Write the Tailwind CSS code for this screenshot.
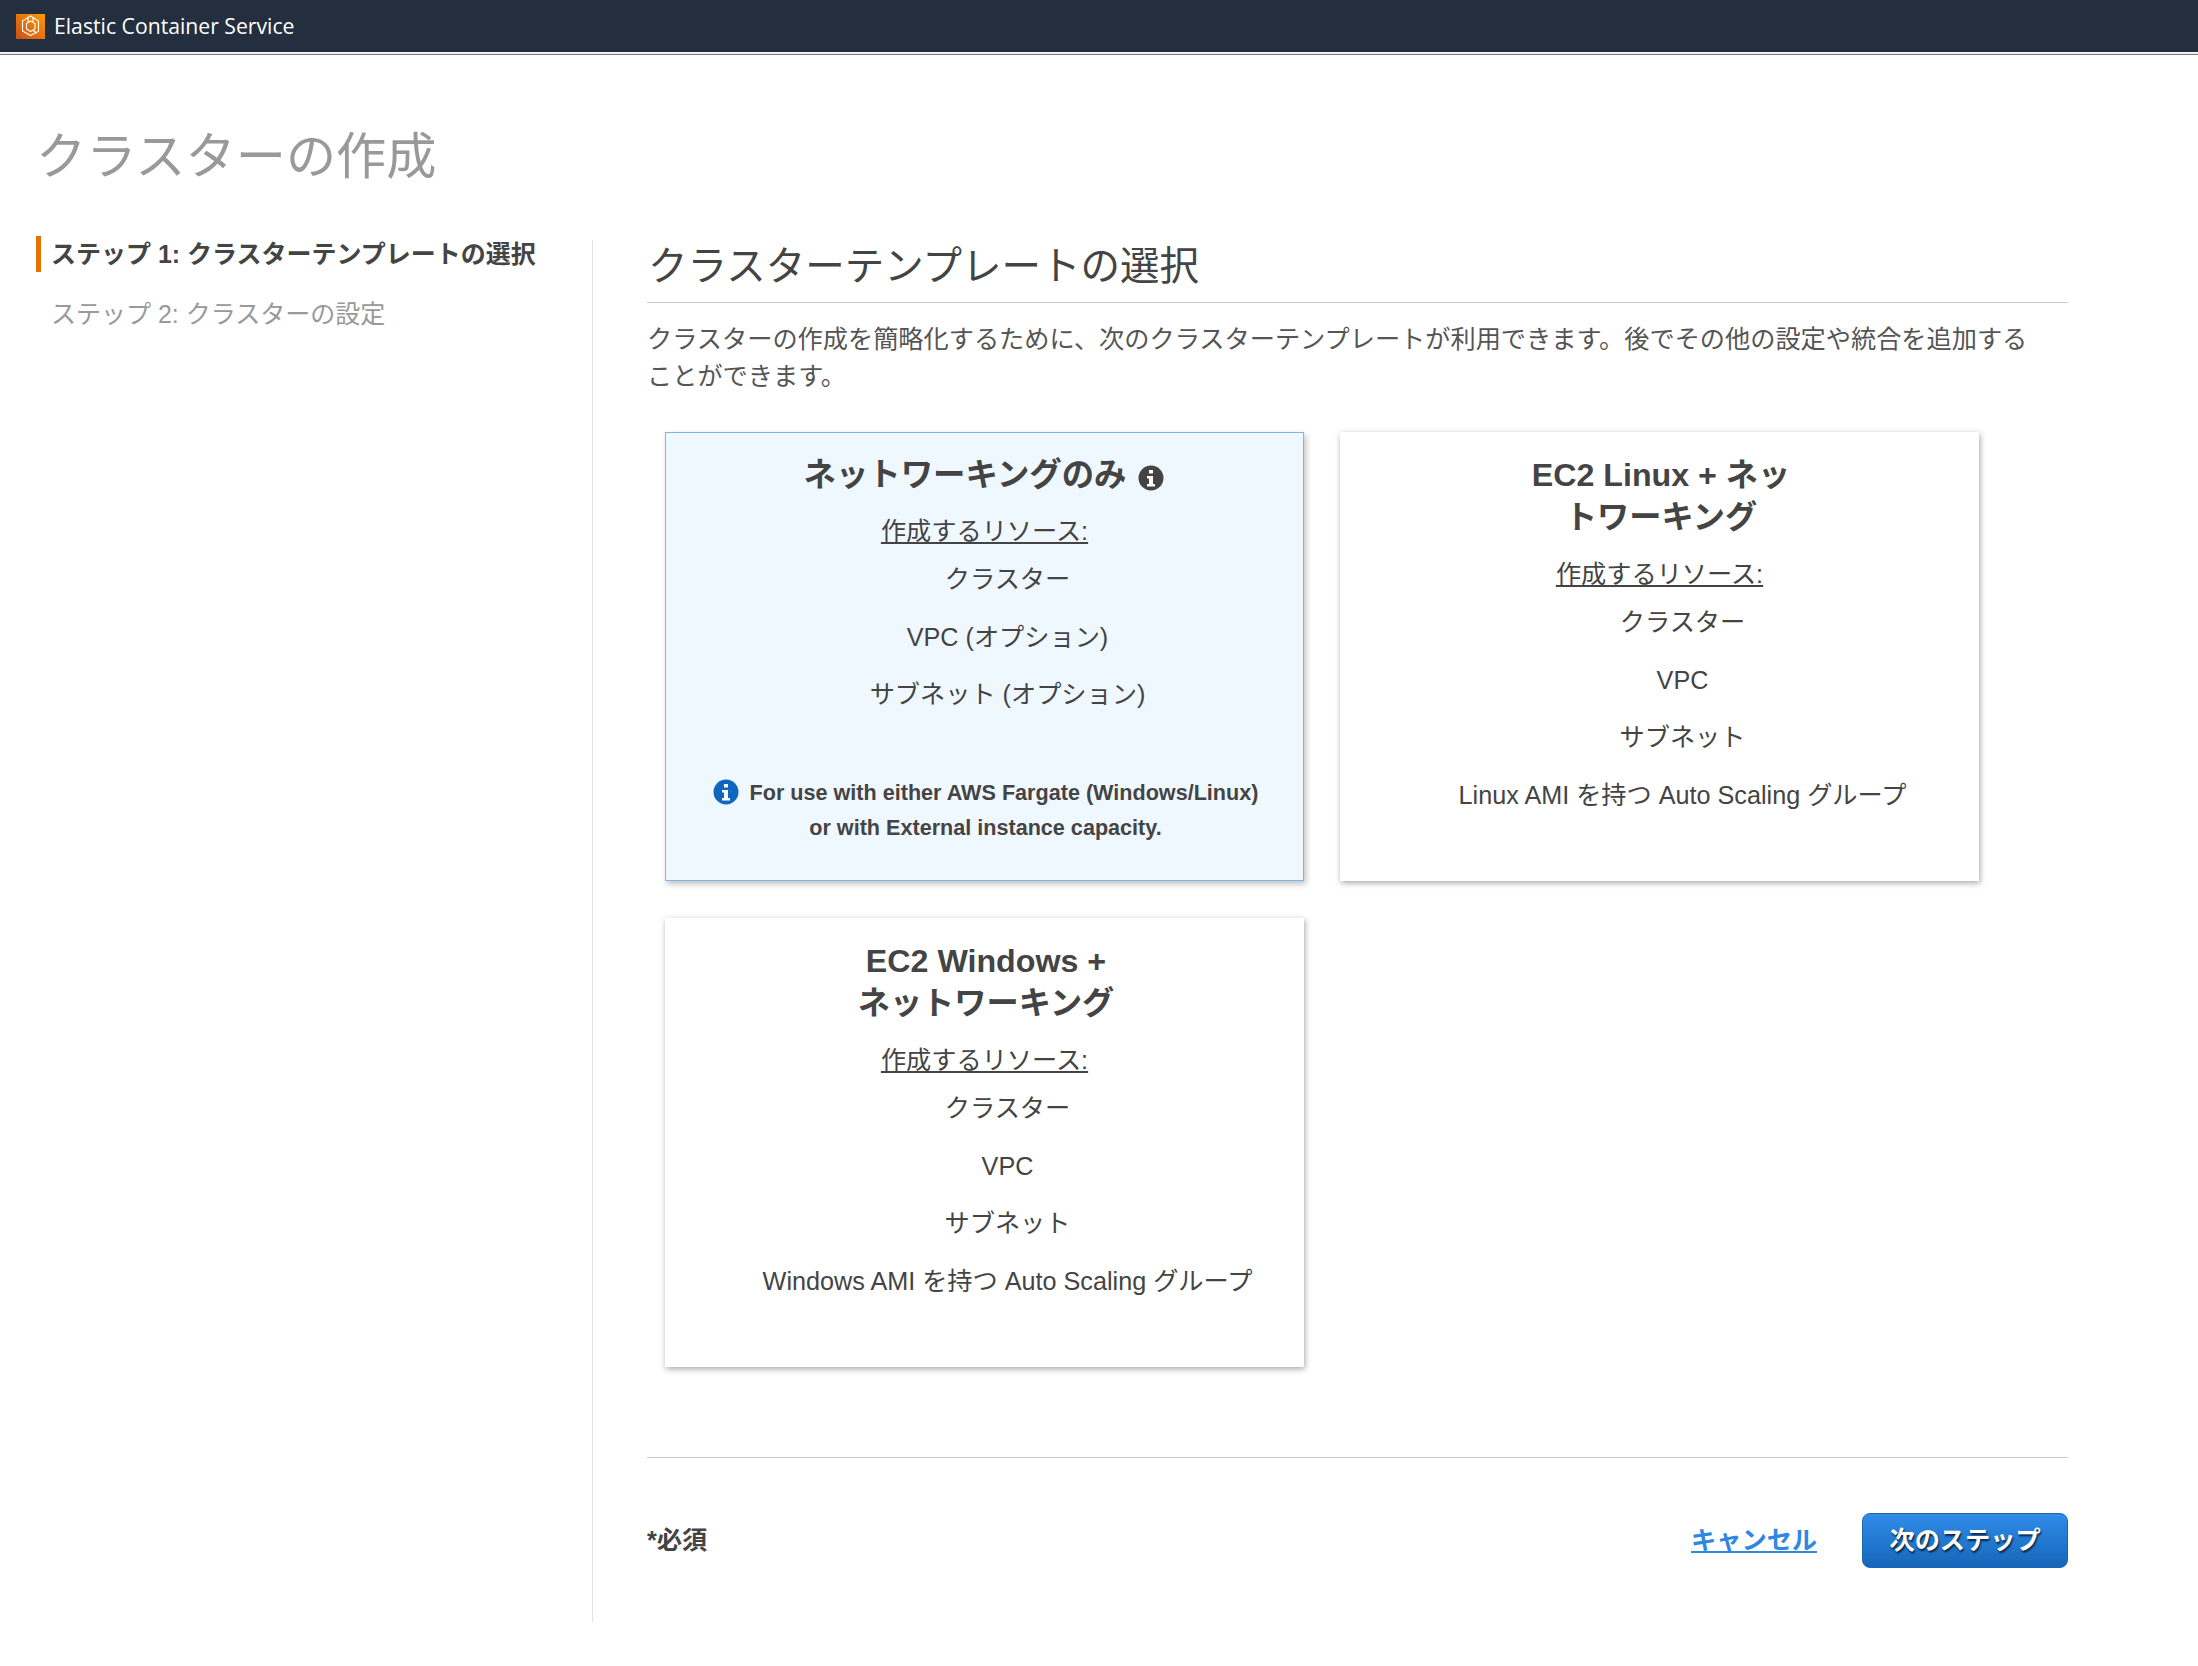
<!DOCTYPE html>
<html lang="ja"><head><meta charset="utf-8">
<script src="https://cdn.jsdelivr.net/npm/@tailwindcss/browser@4"></script>
<title>クラスターの作成</title></head>
<body class="bg-white text-[#444] font-['Liberation_Sans','Noto_Sans_CJK_JP',sans-serif]">
<div class="w-[2198px] h-[1666px] overflow-hidden">
<header class="h-[54px] bg-[#232f3e] border-b-2 border-[#eef0f2] shadow-[0_1px_0_#777] flex items-center pl-[16px] gap-[9px] font-['Open_Sans','Noto_Sans',sans-serif] text-white text-[21.2px]">
  <svg class="w-[29px] h-[25px]" viewBox="0 0 29 25"><defs><linearGradient id="g" x1="0" y1="1" x2="1" y2="0"><stop offset="0" stop-color="#c8511b"/><stop offset="1" stop-color="#ff9900"/></linearGradient></defs><rect width="29" height="25" fill="url(#g)"/><path d="M12 3.500L6.500 7v10l8 4.500 5.500-3M17 3.500L22.500 7v10l-1.500 1M12 3.500L14.500 2 17 3.500M12 3.500v5M17 3.500v5M14.500 7L19 9.500v5.500l-4.500 2.500-4-2.500V9.500zM16.500 16.300L21 19" fill="none" stroke="#fff" stroke-width="1.100"/></svg>
  <span>Elastic Container Service</span>
</header>
<h1 class="text-[50.2px] leading-[60px] text-[#999] pl-[36px] pt-[73px] font-normal">クラスターの作成</h1>
<div class="flex mt-[53px]">
  <nav class="w-[592px] shrink-0 pl-[36px] text-[25px] mt-[-4px]">
    <div class="border-l-[5px] border-[#e67300] pl-[10px] h-[36px] leading-[36px] font-bold text-[#444]">ステップ 1: クラスターテンプレートの選択</div>
    <div class="pl-[15px] mt-[24px] leading-[36px] text-[#999]">ステップ 2: クラスターの設定</div>
  </nav>
  <main class="border-l border-[#e2e2e2] h-[1382px] pl-[54px] w-[1476px] pt-[1px]">
    <h2 class="text-[39.5px] leading-[50px] font-normal border-b border-[#ccc] pb-[11px] pl-[1px]">クラスターテンプレートの選択</h2>
    <p class="text-[25.2px] leading-[37px] mt-[18px] w-[1400px] text-[#555]">クラスターの作成を簡略化するために、次のクラスターテンプレートが利用できます。後でその他の設定や統合を追加することができます。</p>
    <div class="grid grid-cols-[639px_639px] gap-x-[36px] gap-y-[37px] mt-[37px] pl-[18px]">
      <section class="h-[449px] border border-[#7db7ea] bg-[#f0f8ff] shadow-[2px_3px_6px_rgba(0,0,0,.25)] text-center pt-[21px]">
        <h3 class="text-[32.4px] leading-[42px] font-bold pr-[1px]">ネットワーキングのみ <svg class="inline w-[26px] h-[26px] align-[-5px] ml-[3px]" viewBox="0 0 26 26"><circle cx="13" cy="13" r="12.500" fill="#444"/><path d="M11 5h4v3.500h-4zM9 11h6v8h2v2.500H9V19h2v-5.500H9z" fill="#fff"/></svg></h3>
        <div class="text-[25.2px] underline leading-[37px] mt-[17px]">作成するリソース:</div>
        <ul class="pl-[46px] text-[25.2px] leading-[37px] mt-[11px]">
          <li class="mb-[20.6px]">クラスター</li><li class="mb-[20.6px]">VPC (オプション)</li><li>サブネット (オプション)</li>
        </ul>
        <div class="mt-[62px] text-[21.6px] leading-[35px] font-bold pl-[2px]"><svg class="inline w-[26px] h-[26px] align-[-5px] mr-[11px]" viewBox="0 0 26 26"><circle cx="13" cy="13" r="12.500" fill="#0f66bf"/><path d="M11 5h4v3.500h-4zM9 11h6v8h2v2.500H9V19h2v-5.500H9z" fill="#fff"/></svg>For use with either AWS Fargate (Windows/Linux)<br>or with External instance capacity.</div>
      </section>
      <section class="h-[449px] bg-white shadow-[1px_2px_6px_rgba(0,0,0,.35)] text-center pt-[22px]">
        <h3 class="text-[32.2px] leading-[42px] font-bold pl-[3px]">EC2 Linux + ネッ<br>トワーキング</h3>
        <div class="text-[25.2px] underline leading-[37px] mt-[18px]">作成するリソース:</div>
        <ul class="pl-[46px] text-[25.2px] leading-[37px] mt-[11px]">
          <li class="mb-[20.6px]">クラスター</li><li class="mb-[20.6px]">VPC</li><li class="mb-[20.6px]">サブネット</li><li>Linux AMI を持つ Auto Scaling グループ</li>
        </ul>
      </section>
      <section class="h-[449px] bg-white shadow-[1px_2px_6px_rgba(0,0,0,.35)] text-center pt-[22px]">
        <h3 class="text-[32.2px] leading-[42px] font-bold pl-[3px]">EC2 Windows +<br>ネットワーキング</h3>
        <div class="text-[25.2px] underline leading-[37px] mt-[18px]">作成するリソース:</div>
        <ul class="pl-[46px] text-[25.2px] leading-[37px] mt-[11px]">
          <li class="mb-[20.6px]">クラスター</li><li class="mb-[20.6px]">VPC</li><li class="mb-[20.6px]">サブネット</li><li>Windows AMI を持つ Auto Scaling グループ</li>
        </ul>
      </section>
    </div>
    <div class="border-t border-[#ccc] mt-[90px] pt-[55px] flex items-center justify-between">
      <span class="text-[25.2px] font-bold">*必須</span>
      <div class="flex items-center gap-[45px]">
        <a class="text-[25.2px] font-bold underline text-[#2e87e0]">キャンセル</a>
        <button class="w-[206px] h-[55px] rounded-[8px] text-white font-bold text-[25.2px] bg-linear-to-b from-[#2f8ce8] to-[#1566ba] border border-[#1a66b0] [text-shadow:1px_2px_2px_rgba(0,0,0,.7)]">次のステップ</button>
      </div>
    </div>
  </main>
</div>
</div>
</body></html>
